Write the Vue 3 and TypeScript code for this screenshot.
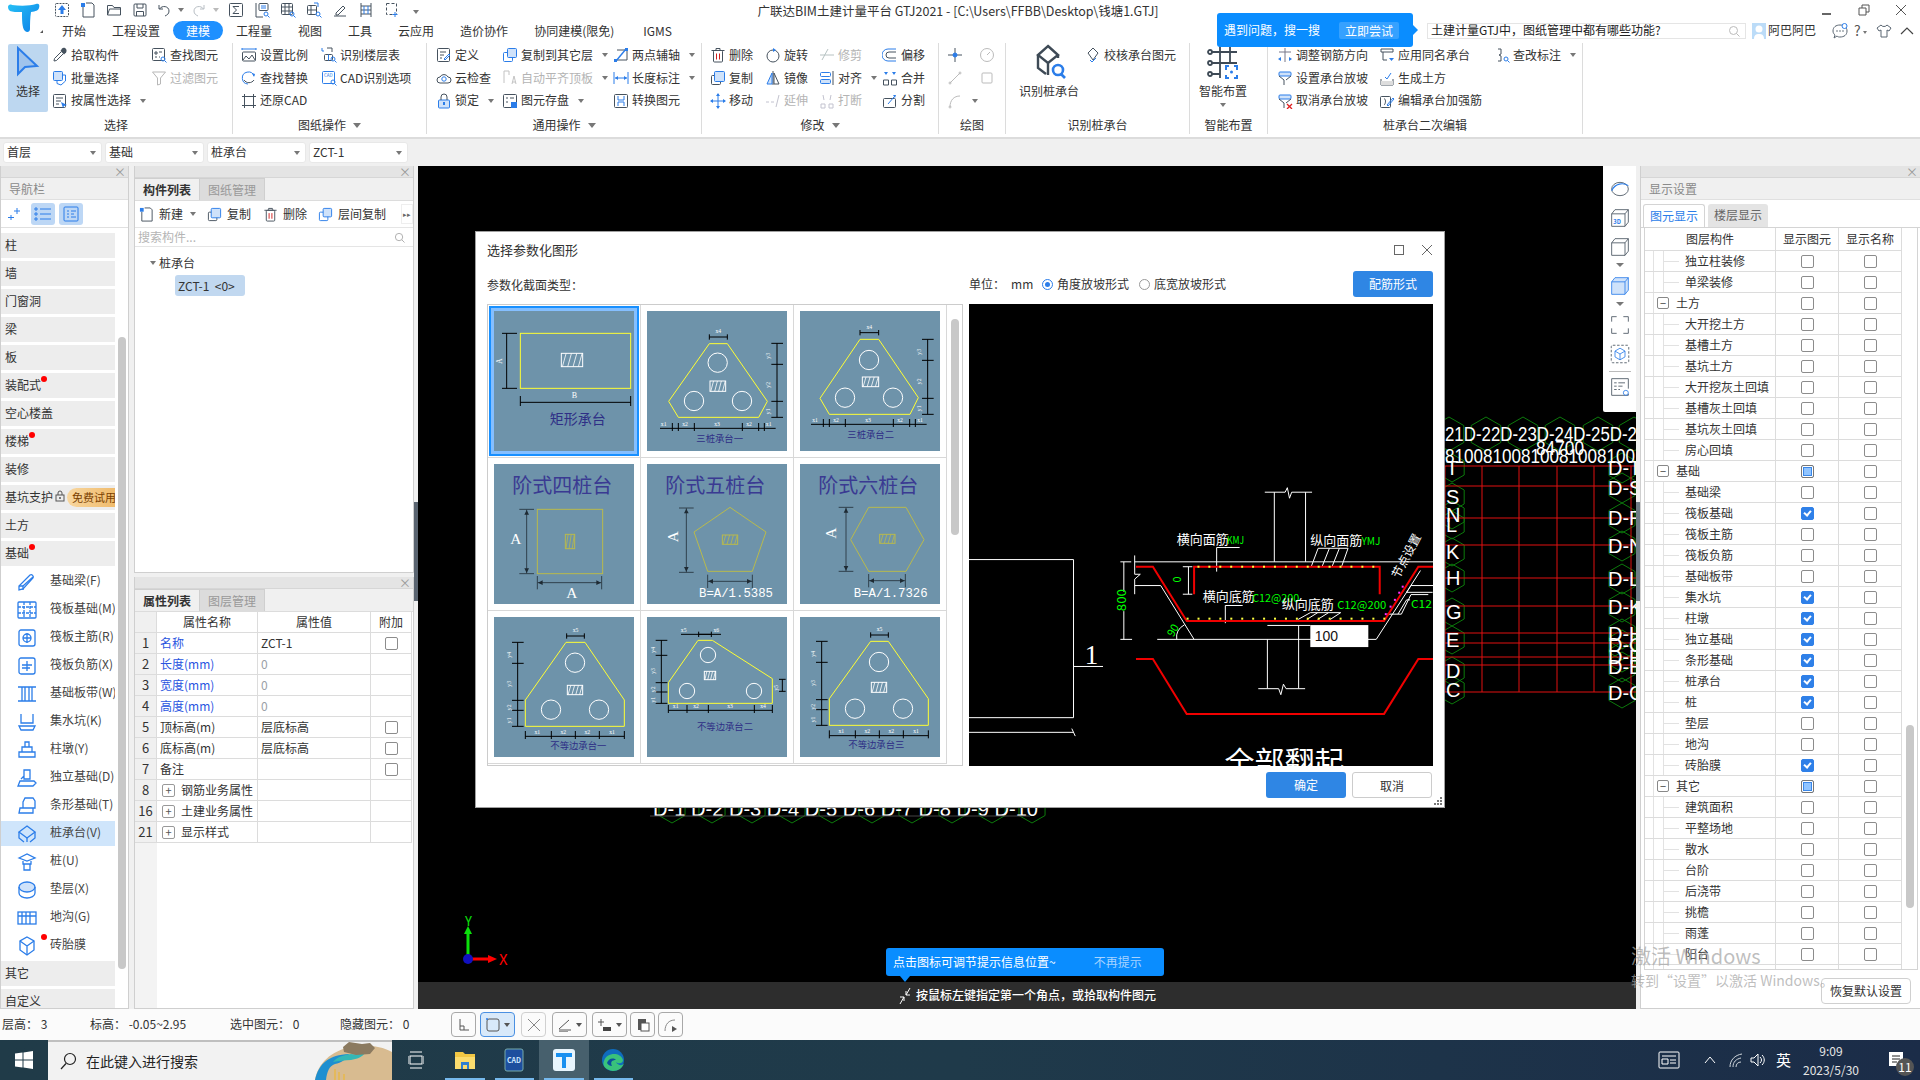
<script setup lang="ts">
type Item = { t?: string; i: string; d?: boolean; c?: boolean }
type Col = { w: number; items?: Item[]; big?: { i: string; t: string; a?: boolean; c?: boolean } }
type Group = { w: number; pad: number; label: string; car?: boolean; cols: Col[] }

const D = '#46525e'
const B = '#2b7de9'
const L = '#cfe2fa'
const P = (d: string, c = D, w = 1) => `<path d="${d}" fill="none" stroke="${c}" stroke-width="${w}"/>`
const F = (d: string, c = D) => `<path d="${d}" fill="${c}"/>`
const R = (x: number, y: number, w: number, h: number, c = D, f = 'none', r = 1) =>
  `<rect x="${x}" y="${y}" width="${w}" height="${h}" rx="${r}" stroke="${c}" fill="${f}"/>`
const C = (x: number, y: number, r: number, c = D, f = 'none') => `<circle cx="${x}" cy="${y}" r="${r}" stroke="${c}" fill="${f}"/>`
const mag = C(12, 12, 2, B) + P('M13.5 13.5l2 2', B)

const ic: Record<string, string> = {
  up: `<rect x="1.5" y="1.5" width="13" height="13" rx="1" stroke="${D}" fill="none" stroke-dasharray="2 1"/>` + F('M8 3l4 5H9.5v4h-3V8H4z', B),
  newf: P('M3 5v10h11V3l-2-2H6', D) + F('M1 1h4v4H1z', B),
  open: P('M1.5 13V3.5h5l1.5 2h6.5V13z M1.5 13l2-6h11', D),
  save: R(2, 2, 12, 12) + P('M5 2v4h6V2 M4.5 14V9.5h7V14'),
  undo: P('M3 3v4h4 M3.5 7C6 3 13 4 13 9c0 3-2 4-4 5'),
  redo: P('M13 3v4H9 M12.5 7C10 3 3 4 3 9c0 3 2 4 4 5', '#b8bec4'),
  sig: R(1.5, 1.5, 13, 13) + P('M11 4.5H5l3.5 3.5L5 11.5h6'),
  calc: P('M2 1v14h7') + R(5, 1.5, 9, 7) + P('M7 4h5M7 6h5', B) + mag,
  grid: R(1.5, 1.5, 11, 11) + P('M5 1.5v11M9 1.5v11M1.5 5h11M1.5 9h11') + mag,
  gridb: R(1.5, 3.5, 9, 9) + P('M5 3.5v9M1.5 8h9') + P('M8 1h4v4', B) + mag,
  pen: P('M2 14h12 M4 11l7-7 2 2-7 7H4z', D),
  tbl: P('M3 1v14M13 1v14M3 4h10M3 8h10M3 12h10') + P('M6 4v8M10 4v8', B),
  sel: `<rect x="2.5" y="1.5" width="10" height="11" stroke="${D}" fill="none" stroke-dasharray="3 2"/>` + P('M11 10v5M8.5 12.5h5', B),
  pick: F('M10 1.5c1-1 3-1 4 .5s.5 3-.5 4L12 7.5 8.5 4z') + P('M9 5L2.5 11.5 2 14l2.5-.5L11 7'),
  batch: R(1.5, 1.5, 9, 9, B, L) + P('M5 10.5v3l4 1.5 4.5-4V5h-3', B),
  attr: R(1.5, 1.5, 12, 13) + P('M4 5h7M4 8h5M4 11h3') + F('M9 9l6 3-3 1-1 2z', B),
  find: R(1.5, 1.5, 12, 12) + P('M4 5h2v2H4zM8 5h3M4 10h2M8 10h1') + mag,
  filt: P('M1.5 2h13l-5 6v6l-3 1V8z', '#999'),
  scale: P('M1 2h14M1 1v2M15 1v2', B) + R(1.5, 5, 13, 9) + P('M2 13l3-4 3 3 3-4 3 5'),
  fr: P('M13 6A6 6 0 1 0 7 14', B) + P('M3 10a6 6 0 0 0 10 0', D) + F('M11 3l3 1-1 3z', B),
  rest: R(3.5, 3.5, 9, 9) + P('M1 3.5h14M1 12.5h14M3.5 1v14M12.5 1v14'),
  floor: R(3.5, 7.5, 8, 6) + P('M7.5 7.5v6M1 1v3h2', B) + P('M6 1h5v4') + mag,
  cad: R(1.5, 1.5, 12, 12, B) + mag + `<text x="3" y="7" font-size="4.5" fill="${B}">CAD</text>`,
  def: R(1.5, 1.5, 12, 13) + P('M4 5h6M4 8h4M4 11h2') + P('M8 12l5-5 1 1-5 5z', B),
  cloud: P('M4 13a3 3 0 0 1 0-6 4.5 4.5 0 0 1 8 0 3 3 0 0 1 0 6z') + C(8, 9, 2.2, B),
  lock: R(2.5, 7, 11, 8, B, L) + P('M5 7V4a3 3 0 0 1 6 0v3') + F('M7 9h2v3H7z', B),
  cpto: R(1.5, 5.5, 9, 9, B) + R(5.5, 1.5, 9, 9, B, L),
  alg: P('M2 1h5v4 M2 1v12', '#aaa') + P('M10 14l2-8 2 8 M10.5 12h3', '#aaa'),
  store: R(1.5, 1.5, 13, 13) + P('M4 5h2M8 5h4M4 9h2') + F('M9 9h6v6H9z', B),
  twopt: P('M4 3h10v10H2', D) + P('M3 14L13 2', B, 1.4) + F('M12 1h3v3h-3zM1 12h3v3H1z', B),
  len: P('M1 2v12M15 2v12M2 8h12', B) + F('M2 8l3-2v4zM14 8l-3-2v4z', B),
  conv: R(1.5, 1.5, 13, 13) + P('M5 3v4h6V3M11 13V9H5v4', B),
  del: R(3.5, 3.5, 9, 11.5) + P('M1.5 3.5h13M6 3V1.5h4V3') + P('M6.5 6.5v6M9.5 6.5v6', '#d02020'),
  rot: C(8, 9, 6) + F('M8 1l3 2-3 2z', B),
  trim: P('M3 13L9 2M1 8h14', '#9aa'),
  copy: R(1.5, 5.5, 9, 9) + R(4.5, 1.5, 10, 10, B, L),
  mir: P('M8 1v14', D) + F('M7 3v11H2z', L) + P('M7 3v11H2z', B) + P('M9 3v11h5z'),
  alignI: R(1.5, 2.5, 10, 4, B) + R(1.5, 9.5, 10, 4, B, L) + P('M14 1v14'),
  merge: P('M1.5 10h5v5h-5zM9.5 10h5v5h-5z') + F('M2 2l2 3 2-3zM10 2l2 3 2-3z', B),
  move: P('M8 1v14M1 8h14', B) + F('M8 0l2 3H6zM8 16l2-3H6zM0 8l3 2V6zM16 8l-3 2V6z', B),
  ext: P('M1 9h3M6 9h3M11 14L14 2', '#aab'),
  brk: P('M2 11h4v4H2zM10 11h4v4h-4zM4 2l1 5M12 2l-1 5', '#aab'),
  off: P('M14 2H6a6 6 0 0 0 0 12h8', B) + P('M14 5H7a3 3 0 0 0 0 6h7'),
  split: R(1.5, 5.5, 12, 9) + P('M6 11l6-7', B) + F('M11 2l3 0-1 3z', B),
  dot: P('M8 1v14M1 8h14', D) + C(8, 8, 2, B, B),
  dial: C(8, 8, 6.5, '#bbb') + P('M8 8l3-3', '#bbb'),
  ln: P('M3 13L13 3', '#bbb') + C(3, 13, 1, '#bbb') + C(13, 3, 1, '#bbb'),
  sq: R(3, 3, 10, 10, '#bbb'),
  arc: P('M3 14C3 7 7 3 13 3', '#bbb') + C(3, 14, 1, '#bbb'),
  chk: P('M8 1l5 5-5 7-5-7z') + P('M5 13l2 2 4-4', B),
  adj: P('M8 1v14', '#778') + P('M2 5h12', '#778') + F('M1 12l3-2v4zM15 12l-3-2v4z', B),
  slope: R(2, 2, 12, 4, B, L) + P('M2 6l5 4v5M14 6l-5 4'),
  slopex: R(2, 2, 12, 4, B, L) + P('M2 6l5 4v5M14 6l-5 4') + P('M10 11l5 5M15 11l-5 5', '#e02020', 1.3),
  same: P('M2 2h12v3H2zM4 5v8h4') + F('M10 11h5l-2.5 3z', B),
  soil: P('M2 9v6h12V9') + F('M2 11h12v4H2z', '#ddd') + P('M6 7l2 2 4-6', B),
  edit: R(1.5, 3.5, 10, 11) + P('M5 6c2-1 2 5 0 6') + P('M8 12l6-7 1 1-6 7z', B),
  note: P('M4 2h3v5l-2 1 2 1v5H4') + mag
}
const bic: Record<string, string> = {
  arrow: `<path d="M10 4v26l7-7 12-1z" fill="#9fc3ec" stroke="${B}" stroke-width="2"/>`,
  pile: `<g fill="none" stroke="#3e4a56" stroke-width="2.4"><path d="M19 2l10 9-10 8-10-8z"/><path d="M9 11v13l8 6M29 11v3M19 19v12"/></g><circle cx="29" cy="26" r="5" fill="none" stroke="${B}" stroke-width="2.6"/><path d="M32 30l4 4" stroke="${B}" stroke-width="2.6"/>`,
  smart: `<g fill="none" stroke="#3e4a56" stroke-width="1.8"><path d="M9 8h25M9 19h25M9 30h8M17 2v32M27 2v16"/><circle cx="7" cy="8" r="2"/><circle cx="7" cy="19" r="2"/><circle cx="7" cy="30" r="2"/></g><g fill="none" stroke="${B}" stroke-width="2"><path d="M23 26v-4h3M31 22h3v4M34 31v3h-3M26 34h-3v-3"/></g><circle cx="28.5" cy="28" r="1.5" fill="${B}"/>`
}

const groups: Group[] = [
  { w: 233, pad: 8, label: '选择', cols: [
    { w: 44, big: { i: 'arrow', t: '选择', a: true } },
    { w: 99, items: [{ i: 'pick', t: '拾取构件' }, { i: 'batch', t: '批量选择' }, { i: 'attr', t: '按属性选择', c: true }] },
    { w: 80, items: [{ i: 'find', t: '查找图元' }, { i: 'filt', t: '过滤图元', d: true }] }] },
  { w: 194, pad: 8, label: '图纸操作', car: true, cols: [
    { w: 80, items: [{ i: 'scale', t: '设置比例' }, { i: 'fr', t: '查找替换' }, { i: 'rest', t: '还原CAD' }] },
    { w: 100, items: [{ i: 'floor', t: '识别楼层表' }, { i: 'cad', t: 'CAD识别选项' }] }] },
  { w: 275, pad: 9, label: '通用操作', car: true, cols: [
    { w: 66, items: [{ i: 'def', t: '定义' }, { i: 'cloud', t: '云检查' }, { i: 'lock', t: '锁定', c: true }] },
    { w: 111, items: [{ i: 'cpto', t: '复制到其它层', c: true }, { i: 'alg', t: '自动平齐顶板', d: true, c: true }, { i: 'store', t: '图元存盘', c: true }] },
    { w: 88, items: [{ i: 'twopt', t: '两点辅轴', c: true }, { i: 'len', t: '长度标注', c: true }, { i: 'conv', t: '转换图元' }] }] },
  { w: 237, pad: 8, label: '修改', car: true, cols: [
    { w: 55, items: [{ i: 'del', t: '删除' }, { i: 'copy', t: '复制' }, { i: 'move', t: '移动' }] },
    { w: 54, items: [{ i: 'rot', t: '旋转' }, { i: 'mir', t: '镜像' }, { i: 'ext', t: '延伸', d: true }] },
    { w: 63, items: [{ i: 'trim', t: '修剪', d: true }, { i: 'alignI', t: '对齐', c: true }, { i: 'brk', t: '打断', d: true }] },
    { w: 50, items: [{ i: 'off', t: '偏移' }, { i: 'merge', t: '合并' }, { i: 'split', t: '分割' }] }] },
  { w: 67, pad: 8, label: '绘图', cols: [
    { w: 32, items: [{ i: 'dot' }, { i: 'ln' }, { i: 'arc', c: true }] },
    { w: 24, items: [{ i: 'dial' }, { i: 'sq' }] }] },
  { w: 184, pad: 7, label: '识别桩承台', cols: [
    { w: 72, big: { i: 'pile', t: '识别桩承台' } },
    { w: 100, items: [{ i: 'chk', t: '校核承台图元' }] }] },
  { w: 78, pad: 3, label: '智能布置', cols: [{ w: 60, big: { i: 'smart', t: '智能布置', c: true } }] },
  { w: 315, pad: 9, label: '桩承台二次编辑', cols: [
    { w: 102, items: [{ i: 'adj', t: '调整钢筋方向' }, { i: 'slope', t: '设置承台放坡' }, { i: 'slopex', t: '取消承台放坡' }] },
    { w: 115, items: [{ i: 'same', t: '应用同名承台' }, { i: 'soil', t: '生成土方' }, { i: 'edit', t: '编辑承台加强筋' }] },
    { w: 80, items: [{ i: 'note', t: '查改标注', c: true }] }] }
]

const qat = ['up', 'newf', 'open', 'save']
const qat2 = ['sig', 'calc', 'grid', 'gridb', 'pen', 'tbl', 'sel']
const tabs = ['开始', '工程设置', '建模', '工程量', '视图', '工具', '云应用', '造价协作', '协同建模(限免)', 'IGMS']
const selects = ['首层', '基础', '桩承台', 'ZCT-1']

const navTop = ['柱', '墙', '门窗洞', '梁', '板', '装配式', '空心楼盖', '楼梯', '装修', '基坑支护', '土方', '基础']
const navDots: Record<string, number> = { 装配式: 40, 楼梯: 28, 基础: 28, 砖胎膜: 40 }
const s20 = `fill="none" stroke="${B}" stroke-width="1.3"`
const navSub: { t: string; i: string; on?: boolean }[] = [
  { t: '基础梁(F)', i: `<g ${s20}><path d="M2 18v-4L13 3c2-1 4 1 3 3L6 17z"/><path d="M2 14h4v4"/><path d="M6 14L16 5"/></g>` },
  { t: '筏板基础(M)', i: `<g ${s20}><rect x="1" y="2" width="18" height="16" rx="1"/><path d="M7 2v16M13 2v16M1 7h18M1 13h18" stroke-dasharray="3 1"/></g>` },
  { t: '筏板主筋(R)', i: `<g ${s20}><rect x="2" y="2" width="16" height="16" rx="2"/><circle cx="10" cy="10" r="4"/><path d="M10 5v10M6 10h8"/></g>` },
  { t: '筏板负筋(X)', i: `<g ${s20}><rect x="2" y="2" width="16" height="16" rx="2"/><path d="M5 9h10M5 12h8M10 5v10"/></g>` },
  { t: '基础板带(W)', i: `<g ${s20}><path d="M1 3h18M1 17h18M5 3v14M8 3v14M12 3v14M15 3v14"/></g>` },
  { t: '集水坑(K)', i: `<g ${s20}><path d="M4 2v9h12V2M2 14h16l-2 4H4z"/></g>` },
  { t: '柱墩(Y)', i: `<g ${s20}><path d="M8 2h4v5H8zM5 7h10v5H5zM2 12h16v5H2z"/></g>` },
  { t: '独立基础(D)', i: `<g ${s20}><path d="M7 2h6v9H7zM4 11l3-3M3 13h14l2 2-3 3H1z"/></g>` },
  { t: '条形基础(T)', i: `<g ${s20}><path d="M8 2h8l2 3v7H6V6zM3 12h13v5H2z"/></g>` },
  { t: '桩承台(V)', on: true, i: `<g ${s20}><path d="M10 2l8 6-8 6-8-6z"/><path d="M2 8v6l5 4M18 8v6l-5 4M10 14v4"/></g>` },
  { t: '桩(U)', i: `<g ${s20}><path d="M2 6l8-4 8 4-8 3z"/><path d="M6 9v3h8V9M7 12v6h6v-6"/></g>` },
  { t: '垫层(X)', i: `<g ${s20}><ellipse cx="10" cy="7" rx="8" ry="5" fill="#cfe2fa"/><path d="M2 7v6c0 3 4 5 8 5s8-2 8-5V7"/></g>` },
  { t: '地沟(G)', i: `<g ${s20}><rect x="1" y="4" width="18" height="12"/><path d="M5 4v12M9 4v12M13 4v12M1 8h18"/></g>` },
  { t: '砖胎膜', i: `<g ${s20}><path d="M10 1l7 4v9l-7 5-7-5V5z"/><path d="M3 5l7 5 7-5M10 10v9"/></g>` }
]

const props = [
  { n: '1', a: '名称', v: 'ZCT-1', l: true, c: true },
  { n: '2', a: '长度(mm)', v: '0', l: true, z: true },
  { n: '3', a: '宽度(mm)', v: '0', l: true, z: true },
  { n: '4', a: '高度(mm)', v: '0', l: true, z: true },
  { n: '5', a: '顶标高(m)', v: '层底标高', c: true },
  { n: '6', a: '底标高(m)', v: '层底标高', c: true },
  { n: '7', a: '备注', v: '', c: true },
  { n: '8', a: '钢筋业务属性', v: '', p: true },
  { n: '16', a: '土建业务属性', v: '', p: true },
  { n: '21', a: '显示样式', v: '', p: true }
]

type Row = { t: string; par?: boolean; s?: 'on' | 'mix' }
const rows: Row[] = [
  { t: '独立柱装修' }, { t: '单梁装修' }, { t: '土方', par: true }, { t: '大开挖土方' }, { t: '基槽土方' }, { t: '基坑土方' },
  { t: '大开挖灰土回填' }, { t: '基槽灰土回填' }, { t: '基坑灰土回填' }, { t: '房心回填' },
  { t: '基础', par: true, s: 'mix' }, { t: '基础梁' }, { t: '筏板基础', s: 'on' }, { t: '筏板主筋' }, { t: '筏板负筋' }, { t: '基础板带' },
  { t: '集水坑', s: 'on' }, { t: '柱墩', s: 'on' }, { t: '独立基础', s: 'on' }, { t: '条形基础', s: 'on' }, { t: '桩承台', s: 'on' }, { t: '桩', s: 'on' },
  { t: '垫层' }, { t: '地沟' }, { t: '砖胎膜', s: 'on' }, { t: '其它', par: true, s: 'mix' }, { t: '建筑面积' }, { t: '平整场地' },
  { t: '散水' }, { t: '台阶' }, { t: '后浇带' }, { t: '挑檐' }, { t: '雨蓬' }, { t: '阳台' }, { t: '' }
]

// ---------- thumbnails (420 unit square) ----------
const Y = '#ffff33'
const OL = '#b9ba4c'
const INK = '#2f2f86'
const SER = "'Liberation Serif','Noto Sans CJK SC',serif"
const ln = (d: string, c = '#000', w = 3) => `<path d="${d}" fill="none" stroke="${c}" stroke-width="${w}"/>`
const tx = (x: number, y: number, s: string, size: number, c = '#fff', fam = '', anchor = 'middle', rot = 0) =>
  `<text transform="translate(${x} ${y}) rotate(${rot})" font-size="${size}" fill="${c}" text-anchor="${anchor}" ${fam ? `font-family="${fam}"` : ''}>${s}</text>`
const hatch = (x1: number, y1: number, x2: number, y2: number, c = '#fff', n = 4) => {
  let s = `<rect x="${x1}" y="${y1}" width="${x2 - x1}" height="${y2 - y1}" fill="none" stroke="${c}" stroke-width="3"/>`
  const dx = (x2 - x1) / n
  for (let i = 0; i < n; i++) s += ln(`M${x1 + dx * i + dx * 0.9} ${y1}L${x1 + dx * i + dx * 0.2} ${y2}`, c, 2.4)
  return s
}
const small = (x: number, y: number, s: string, rot = 0) => tx(x, y, s, 17, '#fff', SER, 'middle', rot)
type Tri = {
  poly: string; cs: number[][]; r: number; h: number[]; top: number[]; topT: string
  vx: number; vy: number[]; vT: string[]; side: number
  by: number; bx: number[]; bt: number[]; bl: [string, number][]; lab: [number, number, string]
}
const tri = (o: Tri) => {
  let s = `<polygon points="${o.poly}" fill="none" stroke="${Y}" stroke-width="3"/>`
  o.cs.forEach(c => { s += `<circle cx="${c[0]}" cy="${c[1]}" r="${o.r}" fill="none" stroke="#fff" stroke-width="3"/>` })
  s += hatch(o.h[0], o.h[1], o.h[2], o.h[3])
  s += ln(`M${o.top[0]} ${o.top[2]}H${o.top[1]}M${o.top[0]} ${o.top[2] - 8}v16M${o.top[1]} ${o.top[2] - 8}v16`)
  s += small((o.top[0] + o.top[1]) / 2, o.top[2] - 12, o.topT)
  s += ln(`M${o.vx} ${o.vy[0]}V${o.vy[o.vy.length - 1]}`)
  o.vy.forEach(y => { s += ln(`M${o.vx - 17} ${y}h35`) })
  o.vT.forEach((t, i) => { s += small(o.vx + o.side * 20, (o.vy[i] + o.vy[i + 1]) / 2 + 6, t, -90) })
  s += ln(`M${o.bx[0]} ${o.by}H${o.bx[1]}`)
  o.bt.forEach(x => { s += ln(`M${x} ${o.by - 16}v24`) })
  o.bl.forEach(b => { s += small(b[1], o.by - 8, b[0]) })
  s += tx(o.lab[0], o.lab[1], o.lab[2], 28, INK)
  return s
}
const dimArrV = (x: number, y1: number, y2: number) =>
  ln(`M${x} ${y1}V${y2}M${x - 22} ${y1}h44M${x - 22} ${y2}h44`, '#30404c') +
  `<path d="M${x} ${y1 + 2}l-7 14h14zM${x} ${y2 - 2}l-7 -14h14z" fill="#1e2a33"/>`
const dimArrH = (x1: number, x2: number, y: number) =>
  ln(`M${x1} ${y}H${x2}M${x1} ${y - 20}v40M${x2} ${y - 20}v40`, '#30404c') +
  `<path d="M${x1 + 2} ${y}l14 -7v14zM${x2 - 2} ${y}l-14 -7v14z" fill="#1e2a33"/>`
const stepT = (s: string) => tx(205, 86, s, 60, '#3a3a92', SER)

const thumbs: string[] = [
  `<rect x="79" y="67" width="331" height="165" fill="none" stroke="${Y}" stroke-width="3"/>` + hatch(202, 127, 266, 167) +
    ln('M24 67H69M24 232H69M38 67V232M79 255V285M410 255V285M79 274H410') +
    tx(25, 150, 'A', 22, '#fff', SER, 'middle', -90) + tx(241, 262, 'B', 24, '#fff', SER) + tx(251, 340, '矩形承台', 42, INK),
  tri({ poly: '187,98 241,98 361,271 335,319 94,319 65,271', cs: [[212, 155], [141, 270], [285, 270]], r: 29, h: [189, 210, 236, 241],
    top: [187, 241, 78], topT: 'x4', vx: 390, vy: [97, 160, 271, 319], vT: ['y3', 'y2', 'y1'], side: -1, by: 352, bx: [39, 386],
    bt: [76, 94, 142, 286, 335, 352], bl: [['x1', 50], ['x2', 114], ['x3', 210], ['x2', 306], ['x1', 365]], lab: [218, 392, '三桩承台一'] }),
  tri({ poly: '180,85 236,85 355,260 330,310 88,310 60,262', cs: [[207, 147], [135, 260], [279, 260]], r: 29, h: [187, 198, 236, 227],
    top: [180, 236, 65], topT: 'x4', vx: 383, vy: [85, 148, 262, 310], vT: ['y3', 'y2', 'y1'], side: -1, by: 340, bx: [33, 380],
    bt: [70, 88, 136, 280, 329, 346], bl: [['x1', 45], ['x2', 108], ['x3', 204], ['x2', 300], ['x1', 360]], lab: [212, 380, '三桩承台二'] }),
  stepT('阶式四桩台') + `<rect x="130" y="136" width="196" height="193" fill="none" stroke="${OL}" stroke-width="3"/>` +
    hatch(214, 211, 242, 254, OL, 3) + dimArrV(98, 136, 329) + dimArrH(130, 323, 356) + tx(65, 240, 'A', 46, '#fff', SER) + tx(233, 402, 'A', 46, '#fff', SER),
  stepT('阶式五桩台') + `<polygon points="249,130 357,204 316,322 182,322 141,204" fill="none" stroke="${OL}" stroke-width="3"/>` +
    hatch(226, 213, 272, 241, OL) + dimArrV(118, 132, 325) + dimArrH(182, 316, 352) + tx(92, 218, 'A', 46, '#fff', SER, 'middle', -90) + tx(267, 398, 'B=A/1.5385', 37, '#fff', "'Liberation Mono',monospace"),
  stepT('阶式六桩台') + `<polygon points="206,130 318,130 372,227 318,322 206,322 152,227" fill="none" stroke="${OL}" stroke-width="3"/>` +
    hatch(239, 211, 285, 238, OL) + dimArrV(138, 130, 322) + dimArrH(206, 316, 350) + tx(107, 208, 'A', 46, '#fff', SER, 'middle', -90) + tx(272, 398, 'B=A/1.7326', 37, '#fff', "'Liberation Mono',monospace"),
  tri({ poly: '216,76 273,76 391,249 391,328 94,328 94,249', cs: [[243, 137], [171, 278], [315, 278]], r: 29, h: [220, 205, 266, 233],
    top: [218, 271, 57], topT: 'x5', vx: 71, vy: [76, 139, 250, 280, 328], vT: ['y4', 'y3', 'y2', 'y1'], side: -1, by: 358, bx: [94, 391],
    bt: [94, 172, 244, 316, 391], bl: [['x1', 130], ['x2', 208], ['x2', 280], ['x1', 354]], lab: [253, 397, '不等边承台一'] }),
  tri({ poly: '153,70 196,70 376,185 376,259 64,259 64,197', cs: [[183, 114], [120, 222], [321, 222]], r: 23, h: [172, 163, 206, 188],
    top: [155, 193, 52], topT: '', vx: 43, vy: [70, 115, 197, 225, 259], vT: ['y4', 'y3', 'y2', 'y1'], side: -1, by: 280, bx: [64, 376],
    bt: [64, 120, 184, 322, 376], bl: [['x1', 86], ['x2', 147], ['x3', 249], ['x4', 348]], lab: [234, 340, '不等边承台二'] }) +
    ln('M102 52H222M406 187V223M396 187h20M396 223h20') + small(110, 46, 'x5') + small(208, 46, 'x6') + small(392, 212, 'y5', -90),
  tri({ poly: '212,73 265,73 385,245 385,325 88,325 88,245', cs: [[237, 135], [165, 275], [309, 275]], r: 29, h: [214, 196, 260, 226],
    top: [212, 265, 54], topT: 'x5', vx: 65, vy: [73, 136, 248, 278, 325], vT: ['y4', 'y3', 'y2', 'y1'], side: -1, by: 356, bx: [88, 385],
    bt: [88, 166, 238, 310, 385], bl: [['x1', 124], ['x2', 202], ['x2', 274], ['x1', 348]], lab: [229, 394, '不等边承台三'] })
]

// ---------- preview drawing helpers ----------
const px = (z: number) => (z - 21) * 0.4337
const py = (z: number) => (z - 194) * 0.3764
const dotsTop = Array.from({ length: 17 }, (_, i) => 550 + i * 25.2)
const dotsBot = Array.from({ length: 19 }, (_, i) => 525 + i * 25.2)
const dotsMag = [[1021, 945], [1013, 961], [1003, 980], [993, 998], [982, 1018]]

// ---------- CAD background ----------
const hex = (x: number, y: number, r = 15) =>
  [[0, -r], [r * 0.87, -r / 2], [r * 0.87, r / 2], [0, r], [-r * 0.87, r / 2], [-r * 0.87, -r / 2]].map(p => `${x + p[0]},${y + p[1]}`).join(' ')
const leftL: [string, number][] = [['T', 468], ['S', 497], ['N', 515], ['L', 525], ['K', 552], ['H', 578], ['G', 612], ['E', 640], ['D', 671], ['C', 690]]
const rightL: [string, number][] = [['D-T', 468], ['D-S', 488], ['D-R', 518], ['D-N', 546], ['D-L', 579], ['D-K', 607], ['D-H', 634], ['D-G', 645], ['D-F', 657], ['D-E', 667], ['D-C', 693]]
const topHex = [1449, 1486, 1523, 1560, 1598, 1634]
const botHex = [672, 712, 752, 792, 832, 872, 912, 952, 992, 1032]
const gridX = [1445, 1482, 1519, 1557, 1594, 1631]
const gridY = [466, 486, 518, 545, 578, 606, 633, 643, 657, 665, 692]

const stBtns = [
  { w: 25, ml: 0, i: P('M4 2v11h9M4 9h4v4', '#555') },
  { w: 35, ml: 4, on: true, c: true, i: `<rect x="2" y="2" width="12" height="12" rx="2" stroke="#555" fill="none"/><circle cx="2" cy="2" r="1" fill="${B}"/>` },
  { w: 25, ml: 6, dis: true, i: P('M2 2l12 12M14 2L2 14', '#888') },
  { w: 35, ml: 6, c: true, i: P('M2 12L12 3M2 13h12', '#555') + '<path d="M2 14h9v1H2z" fill="#999"/>' },
  { w: 35, ml: 5, c: true, i: P('M4 2v7M1 5h6', '#555') + '<rect x="6" y="10" width="8" height="4" fill="#444"/>' },
  { w: 25, ml: 3, i: '<rect x="3" y="2" width="8" height="11" fill="#555"/><rect x="6" y="6" width="8" height="8" stroke="#555" fill="#fff"/>' },
  { w: 25, ml: 3, i: P('M2 14C2 7 6 3 12 3', '#888') + '<path d="M9 9l5 3-5 3z" fill="#555"/>' }
]
</script>

<template>
  <div class="app">
    <!-- header -->
    <div class="head">
      <div class="logo">
        <svg width="49" height="41" viewBox="0 0 49 41">
          <defs>
            <linearGradient id="lg" x1="0" y1="0" x2="1" y2="1"><stop offset="0" stop-color="#27c0f5" /><stop offset="1" stop-color="#0a7fe8" /></linearGradient>
          </defs>
          <path d="M8 7c0-2 2-3 4-2 8 1 18 1 24-1 3-1 4 1 3 4-1 3-3 3-8 4-1 6-1 12-1 17 0 3-3 4-5 2-3-3-3-11-3-19-5 0-10 0-12-1-1-1-2-2-2-4z" fill="url(#lg)" />
          <path d="M43 33v-3l-3 3z" fill="#555" />
        </svg>
      </div>
      <div class="head-r">
        <div class="titlebar">
          <div class="qat">
            <svg v-for="q in qat" :key="q" class="qi" viewBox="0 0 16 16" v-html="ic[q]"></svg>
            <span class="qc"><svg class="qi1" viewBox="0 0 16 16" v-html="ic.undo"></svg><i class="car"></i></span>
            <span class="qc"><svg class="qi1" viewBox="0 0 16 16" v-html="ic.redo"></svg><i class="car lite"></i></span>
            <svg v-for="q in qat2" :key="q" class="qi" viewBox="0 0 16 16" v-html="ic[q]"></svg>
            <span class="qmore"><i class="car"></i></span>
          </div>
          <div class="title">广联达BIM土建计量平台 GTJ2021 - [C:\Users\FFBB\Desktop\钱塘1.GTJ]</div>
          <div class="winbtns">
            <svg width="14" height="14" viewBox="0 0 14 14"><path d="M2 10h9v2H2z" fill="#666" /></svg>
            <svg width="14" height="14" viewBox="0 0 14 14"><path d="M2 5h7v7H2zM5 5V2h7v7H9" fill="none" stroke="#555" /></svg>
            <svg width="14" height="14" viewBox="0 0 14 14"><path d="M2 2l10 10M12 2L2 12" stroke="#555" /></svg>
          </div>
        </div>
        <div class="menurow">
          <div class="tabs">
            <span v-for="t in tabs" :key="t" class="tab" :class="{ act: t === '建模' }">{{ t }}</span>
          </div>
          <div class="search">
            <span>土建计量GTJ中&#xFF0C;图纸管理中都有哪些功能?</span>
            <svg width="12" height="12" viewBox="0 0 12 12"><circle cx="5.5" cy="5.5" r="4" fill="none" stroke="#bbb" /><path d="M8.5 8.5l3 3" stroke="#bbb" /></svg>
          </div>
          <div class="avatar"><svg width="14" height="16" viewBox="0 0 14 16"><path d="M0 0h14v16H0z" fill="#bcdcf8" /><circle cx="7" cy="6" r="3.5" fill="#fff" /><path d="M2 16c0-4 2-5 5-5s5 1 5 5z" fill="#fff" /></svg></div>
          <span class="uname">阿巴阿巴</span>
          <svg class="hi chat" viewBox="0 0 16 16"><path d="M8 2c4 0 7 2 7 6s-3 6-7 6c-1 0-2 0-3-1l-3 2 1-3C2 11 1 10 1 8c0-4 3-6 7-6z" fill="none" stroke="#5a6672" /><circle cx="5" cy="8" r=".8" fill="#5a6672" /><circle cx="8" cy="8" r=".8" fill="#5a6672" /><circle cx="11" cy="8" r=".8" fill="#5a6672" /><circle cx="12.5" cy="3" r="2.5" fill="#fff" stroke="#2b7de9" /></svg>
          <span class="qm">?<i class="car tiny"></i></span>
          <svg class="hi shirt" viewBox="0 0 16 16"><path d="M5 2L1 5l2 3 2-1v7h6V7l2 1 2-3-4-3c-1 2-5 2-6 0z" fill="none" stroke="#5a6672" /></svg>
          <svg class="hi upb" viewBox="0 0 16 16"><path d="M2 11l6-6 6 6" fill="none" stroke="#444" stroke-width="1.2" /></svg>
        </div>
      </div>
    </div>

    <!-- ribbon -->
    <div class="ribbon">
      <div v-for="g in groups" :key="g.label" class="rg" :style="{ width: g.w + 'px' }">
        <div class="rg-body" :style="{ paddingLeft: g.pad + 'px' }">
          <div v-for="(c, ci) in g.cols" :key="ci" class="rc" :style="{ width: c.w + 'px' }">
            <div v-if="c.big" class="big" :class="{ active: c.big.a }">
              <svg class="bigi" viewBox="0 0 40 38" v-html="bic[c.big.i]"></svg>
              <span class="bigt">{{ c.big.t }}</span>
              <i v-if="c.big.c" class="car bigc"></i>
            </div>
            <template v-else>
              <div v-for="it in c.items" :key="it.i" class="ri" :class="{ dis: it.d }">
                <svg class="ic" viewBox="0 0 16 16" v-html="ic[it.i]"></svg>
                <span v-if="it.t">{{ it.t }}</span>
                <i v-if="it.c" class="car"></i>
              </div>
            </template>
          </div>
        </div>
        <div class="rg-label">{{ g.label }}<i v-if="g.car" class="car lab"></i></div>
      </div>
    </div>

    <!-- selectors -->
    <div class="selbar">
      <div v-for="s in selects" :key="s" class="sel">{{ s }}<i class="car"></i></div>
    </div>

    <!-- main -->
    <div class="main">
      <!-- nav -->
      <div class="nav panel">
        <div class="stripe"><span class="xx">×</span></div>
        <div class="phead">导航栏</div>
        <div class="navtool">
          <svg width="16" height="16" viewBox="0 0 16 16"><path d="M11 2v6M8 5h6M5 9v5M2 11.5h6" stroke="#2b7de9" fill="none" /></svg>
          <span class="ntb"><svg width="18" height="16" viewBox="0 0 18 16"><path d="M6 3h11M6 8h11M6 13h11" stroke="#2b7de9" /><path d="M1 2h2v2H1zM1 7h2v2H1zM1 12h2v2H1z" fill="none" stroke="#2b7de9" /></svg></span>
          <span class="ntb"><svg width="16" height="16" viewBox="0 0 16 16"><rect x="1" y="1" width="14" height="14" rx="1" fill="none" stroke="#2b7de9" /><path d="M4 5h2M8 5h5M4 8h2M8 8h3M4 11h2M8 11h5" stroke="#2b7de9" /></svg></span>
        </div>
        <div class="navbody">
          <div class="navlist">
            <div v-for="n in navTop" :key="n" class="nh">
              {{ n }}
              <i v-if="navDots[n]" class="dot" :style="{ left: navDots[n] + 'px' }"></i>
              <template v-if="n === '基坑支护'">
                <svg class="lock" width="10" height="12" viewBox="0 0 10 12"><rect x="1" y="5" width="8" height="6" fill="none" stroke="#555" /><path d="M3 5V3a2 2 0 0 1 4 0v2" fill="none" stroke="#555" /><circle cx="5" cy="8" r="1" fill="#555" /></svg>
                <span class="free">免费试用</span>
              </template>
            </div>
            <div v-for="n in navSub" :key="n.t" class="ns" :class="{ on: n.on }">
              <svg class="nsi" viewBox="0 0 20 20" v-html="n.i"></svg>
              <span class="nst">{{ n.t }}</span>
              <i v-if="navDots[n.t]" class="dot sub" :style="{ left: navDots[n.t] + 'px' }"></i>
            </div>
            <div class="nh">其它</div>
            <div class="nh">自定义</div>
          </div>
          <div class="navscroll"><div class="navthumb"></div></div>
        </div>
      </div>

      <div class="gut g-l"></div>

      <!-- mid -->
      <div class="mid">
        <div class="panel up">
          <div class="stripe"><span class="xx">×</span></div>
          <div class="ptabs">
            <span class="ptab act">构件列表</span><span class="ptab">图纸管理</span>
          </div>
          <div class="mtool">
            <svg class="mti i0" viewBox="0 0 16 16" v-html="ic.newf"></svg><span>新建</span><i class="car c0"></i>
            <svg class="mti i1" viewBox="0 0 16 16" v-html="ic.copy"></svg><span>复制</span>
            <svg class="mti i2" viewBox="0 0 16 16" v-html="ic.del"></svg><span>删除</span>
            <svg class="mti i3" viewBox="0 0 16 16" v-html="ic.cpto"></svg><span>层间复制</span>
            <span class="more">▸▸</span>
          </div>
          <div class="msearch">
            <span>搜索构件...</span>
            <svg width="11" height="11" viewBox="0 0 12 12"><circle cx="5.5" cy="5.5" r="4" fill="none" stroke="#aaa" /><path d="M8.5 8.5l3 3" stroke="#aaa" /></svg>
          </div>
          <div class="tree">
            <div class="t1"><i class="car"></i>桩承台</div>
            <div class="t2"><span class="t2in">ZCT-1&nbsp;&nbsp;&lt;0&gt;</span></div>
          </div>
        </div>
        <div class="panel down">
          <div class="stripe"><span class="xx">×</span></div>
          <div class="ptabs">
            <span class="ptab act">属性列表</span><span class="ptab">图层管理</span>
          </div>
          <div class="pt">
            <div class="ptr ph">
              <span class="c-n"></span><span class="c-a ctr">属性名称</span><span class="c-v ctr">属性值</span><span class="c-x ctr">附加</span>
            </div>
            <div v-for="p in props" :key="p.n" class="ptr">
              <span class="c-n num">{{ p.n }}</span>
              <span class="c-a" :class="{ link: p.l }"><i v-if="p.p" class="plus">+</i>{{ p.a }}</span>
              <span class="c-v" :class="{ zero: p.z }">{{ p.v }}</span>
              <span class="c-x ctr"><i v-if="p.c" class="cb"></i></span>
            </div>
            <div class="ptfill"></div>
          </div>
        </div>
      </div>

      <div class="gut g-m"><i class="handle"></i></div>

      <!-- canvas -->
      <div class="canvas">
        <div class="cad">
          <svg class="cadsvg" width="1218" height="816" viewBox="418 166 1218 816">
            <g fill="none" stroke="#0c7a0c">
              <polygon v-for="x in topHex" :key="'t' + x" :points="hex(x, 434, 17)" />
              <polygon v-for="l in leftL" :key="'l' + l[0]" :points="hex(1452, l[1], 14)" />
              <polygon v-for="l in rightL" :key="'r' + l[0]" :points="hex(1622, l[1], 15)" />
              <polygon v-for="x in botHex" :key="'b' + x" :points="hex(x, 808, 15)" />
            </g>
            <g stroke="#e01010">
              <path v-for="x in gridX" :key="'gx' + x" :d="`M${x} 466V692`" />
              <path v-for="y in gridY" :key="'gy' + y" :d="`M1445 ${y}H1636`" />
            </g>
            <g class="cadt" fill="#fff">
              <text x="1445" y="441" textLength="192" lengthAdjust="spacingAndGlyphs">21D-22D-23D-24D-25D-2</text>
              <text x="1445" y="463" textLength="190" lengthAdjust="spacingAndGlyphs">81008100810081008100</text>
              <text x="1536" y="455" textLength="48" lengthAdjust="spacingAndGlyphs">84700</text>
              <text v-for="l in leftL" :key="'tl' + l[0]" x="1446" :y="l[1] + 7">{{ l[0] }}</text>
              <text v-for="l in rightL" :key="'tr' + l[0]" x="1608" :y="l[1] + 7">{{ l[0] }}</text>
              <text x="653" y="816" textLength="385" lengthAdjust="spacingAndGlyphs">D-1 D-2 D-3 D-4 D-5 D-6 D-7 D-8 D-9 D-10</text>
            </g>
            <path d="M650 816H1030" stroke="#444" />
            <path d="M468 955V932" stroke="#0be00b" stroke-width="3" /><path d="M468 926l-4 8h8z" fill="#0be00b" />
            <path d="M468 959H490" stroke="#f00" stroke-width="3" /><path d="M497 959l-9-4v8z" fill="#f00" />
            <circle cx="468" cy="959" r="5" fill="#1010c0" />
            <text x="465" y="926" fill="#0be00b" font-size="13">Y</text>
            <text x="499" y="965" fill="#f00" font-size="15">X</text>
          </svg>
          <div class="rtool">
            <svg class="rti" viewBox="0 0 24 24"><ellipse cx="12" cy="12" rx="10" ry="8" fill="none" stroke="#46525e" /><path d="M2 14C6 5 16 4 22 8" fill="none" stroke="#2b7de9" stroke-width="1.3" /></svg>
            <svg class="rti" viewBox="0 0 24 24"><path d="M2 7h16v15H2zM2 7l4-5h16v15l-4 5M18 7l4-5" fill="none" stroke="#46525e" /><text x="4" y="19" font-size="7" font-weight="700" fill="#2b7de9">3D</text></svg>
            <svg class="rti" viewBox="0 0 24 24"><path d="M2 7h16v15H2zM2 7l4-5h16v15l-4 5M18 7l4-5" fill="none" stroke="#46525e" /></svg>
            <i class="car"></i>
            <svg class="rti" viewBox="0 0 24 24"><path d="M2 7h16v15H2zM2 7l4-5h16v15l-4 5M18 7l4-5" fill="#cfe2fa" stroke="#2b7de9" /></svg>
            <i class="car"></i>
            <svg class="rti" viewBox="0 0 24 24"><path d="M2 8V2h6M16 2h6v6M22 16v6h-6M8 22H2v-6" fill="none" stroke="#46525e" /></svg>
            <svg class="rti" viewBox="0 0 24 24"><rect x="1.5" y="1.5" width="21" height="21" rx="2" fill="none" stroke="#46525e" stroke-dasharray="3 2" /><path d="M12 5l6 3.5v7L12 19l-6-3.5v-7zM6 8.5l6 3.5 6-3.5M12 12v7" fill="none" stroke="#2b7de9" /></svg>
            <i class="rdiv"></i>
            <svg class="rti" viewBox="0 0 24 24"><path d="M2 2h20v12M22 20v2H2V2" fill="none" stroke="#46525e" /><path d="M5 7h3M10 7h8M5 11h3M10 11h5M5 15h3M10 15h2" stroke="#46525e" /><circle cx="19" cy="19" r="3" fill="none" stroke="#2b7de9" /></svg>
          </div>
          <div class="tip">
            <span>点击图标可调节提示信息位置~</span><span class="tip2">不再提示</span>
          </div>
        </div>
        <div class="hint">
          <svg width="14" height="18" viewBox="0 0 14 18"><path d="M12 1L8 8v-4M8 8h4M2 17l4-7h-4M6 10v4" fill="none" stroke="#fff" /></svg>
          <span>按鼠标左键指定第一个角点&#xFF0C;或拾取构件图元</span>
        </div>
      </div>

      <div class="gut g-r"><i class="handle lite"></i></div>

      <!-- right panel -->
      <div class="right panel">
        <div class="stripe"><span class="xx">×</span></div>
        <div class="phead">显示设置</div>
        <div class="rtabs"><span class="rtab act">图元显示</span><span class="rtab">楼层显示</span></div>
        <div class="rt">
          <div class="rtinner">
            <div class="rtr rth"><span>图层构件</span><span>显示图元</span><span>显示名称</span></div>
            <div class="rtscroll">
              <div v-for="(r, i) in rows" :key="i" class="rtr">
                <span class="tc" :class="{ par: r.par, leaf: !r.par }">
                  <i v-if="r.par" class="minus">−</i>{{ r.t }}
                </span>
                <span class="cc"><i class="cb" :class="r.s"></i></span>
                <span class="cc"><i class="cb"></i></span>
              </div>
            </div>
          </div>
          <div class="rsb"><div class="rsbt"></div></div>
        </div>
        <div class="rfoot"><span class="restore">恢复默认设置</span></div>
      </div>
    </div>

    <!-- status -->
    <div class="status">
      <span class="st s1">层高&#xFF1A;&nbsp;3</span>
      <span class="st s2">标高&#xFF1A;&nbsp;-0.05~2.95</span>
      <span class="st s3">选中图元&#xFF1A;&nbsp;0</span>
      <span class="st s4">隐藏图元&#xFF1A;&nbsp;0</span>
      <span v-for="(b, i) in stBtns" :key="i" class="stb" :class="{ on: b.on, dis: b.dis }" :style="{ width: b.w + 'px', marginLeft: b.ml + 'px' }">
        <svg width="16" height="16" viewBox="0 0 16 16" v-html="b.i"></svg>
        <i v-if="b.c" class="car"></i>
      </span>
    </div>

    <!-- taskbar -->
    <div class="taskbar">
      <div class="start">
        <svg width="18" height="18" viewBox="0 0 18 18"><path d="M0 2.5l7.5-1v7H0zM8.5 1.4L18 0v8.5H8.5zM0 9.5h7.5v7l-7.5-1zM8.5 9.5H18V18l-9.5-1.4z" fill="#fff" /></svg>
      </div>
      <div class="tsearch">
        <svg width="18" height="18" viewBox="0 0 18 18"><circle cx="11" cy="7" r="5.5" fill="none" stroke="#222" stroke-width="1.2" /><path d="M7 11.5L2 17" stroke="#222" stroke-width="1.2" /></svg>
        <span>在此键入进行搜索</span>
        <svg class="blob" width="77" height="39" viewBox="0 0 77 39">
          <path d="M0 39C3 22 16 10 36 6c14-3 30-1 41 5v28z" fill="#d8bb90" />
          <path d="M0 39C4 22 14 14 34 13c-2 5-8 9-14 10-6 2-8 8-9 16z" fill="#1e8fd0" />
          <path d="M18 21c4-5 10-7 18-8 6 1 10-1 14-1-3 4-8 6-14 7-6 0-12 1-18 2z" fill="#34b7b6" />
          <path d="M28 6l6-5 13 2 8-1 5 5-5 6-14 1-12-3z" fill="#8b7a60" />
          <path d="M20 28v11M24 31v8M29 33v6" stroke="#e8b94a" stroke-width="1.5" />
        </svg>
      </div>
      <div class="tapps">
        <span class="tapp tv"><svg width="16" height="18" viewBox="0 0 16 18"><path d="M2 1h12M2 17h12" stroke="#fff" /><rect x="2" y="5" width="12" height="8" fill="none" stroke="#fff" /><path d="M0 5v8M16 5v8" stroke="#fff" /></svg></span>
        <span class="tapp u"><svg width="22" height="22" viewBox="0 0 22 22"><path d="M1 3h8l2 2h10v15H1z" fill="#f2c744" /><path d="M1 8h20v12H1z" fill="#fbdc6e" /><path d="M7 13h8v7H7z" fill="#2f7fd0" /><path d="M9 16h4v4H9z" fill="#fbdc6e" /></svg></span>
        <span class="tapp u"><svg width="24" height="24" viewBox="0 0 24 24"><rect x="3" y="1" width="18" height="22" rx="2" fill="#1d4f9e" stroke="#7aa" /><text x="12" y="15" text-anchor="middle" font-size="7" font-weight="700" fill="#cfe8ff">CAD</text></svg></span>
        <span class="tapp act u"><svg width="24" height="24" viewBox="0 0 24 24"><rect x="1" y="1" width="22" height="22" rx="3" fill="#e8f5fd" /><path d="M4 5h16v4h-6v11h-4V9H4z" fill="#1890f0" /></svg></span>
        <span class="tapp u"><svg width="24" height="24" viewBox="0 0 24 24"><circle cx="12" cy="12" r="11" fill="#0f6cbd" /><path d="M3 13C5 5 19 3 22 12c0 4-5 4-7 2 2 4 7 4 8 1-1 5-6 8-11 8-8-1-11-6-9-10z" fill="#39c27b" /><path d="M6 15c1-4 6-6 9-3-4 0-6 2-4 6-2 0-4-1-5-3z" fill="#0b4f9c" /></svg></span>
      </div>
      <div class="tray">
        <svg class="tr0" width="22" height="18" viewBox="0 0 22 18"><rect x="1" y="1" width="20" height="16" rx="1" fill="none" stroke="#fff" /><path d="M4 5h14M4 8h6v5H4zM12 9h6M12 12h6" fill="none" stroke="#fff" /></svg>
        <svg class="tr1" width="12" height="12" viewBox="0 0 12 12"><path d="M1 9l5-6 5 6" fill="none" stroke="#fff" /></svg>
        <svg class="tr2" width="16" height="16" viewBox="0 0 16 16"><path d="M2 15C2 8 7 3 14 2M5 15c0-5 3-8 8-9M8 15c0-3 2-5 5-5" fill="none" stroke="#cfd6dc" /></svg>
        <svg class="tr3" width="16" height="16" viewBox="0 0 16 16"><path d="M1 6h3l4-4v12l-4-4H1zM10 5c2 2 2 4 0 6M12 3c3 3 3 7 0 10" fill="none" stroke="#fff" /></svg>
        <span class="ime">英</span>
        <span class="clock"><span>9:09</span><span>2023/5/30</span></span>
        <span class="notif">
          <svg width="16" height="18" viewBox="0 0 16 18"><path d="M1 1h14v14H1z" fill="#fff" /><path d="M4 5h8M4 8h8M4 11h5" stroke="#222" /></svg>
          <b class="badge">11</b>
        </span>
      </div>
    </div>

    <!-- overlays -->
    <div class="popup">
      <span>遇到问题&#xFF0C;搜一搜</span><span class="try">立即尝试</span><i class="parrow"></i>
    </div>

    <div class="wm wm1">激活 Windows</div>
    <div class="wm wm2">转到“设置”以激活 Windows。</div>

    <div class="dialog">
      <div class="dhead">
        <span>选择参数化图形</span>
        <svg class="dmax" width="14" height="14" viewBox="0 0 14 14"><rect x="2.5" y="2.5" width="9" height="9" fill="none" stroke="#666" /></svg>
        <svg class="dx" width="14" height="14" viewBox="0 0 14 14"><path d="M2 2l10 10M12 2L2 12" stroke="#666" /></svg>
      </div>
      <div class="dbody">
        <div class="dleft">
          <div class="dsub">参数化截面类型&#xFF1A;</div>
          <div class="gridwrap">
            <div class="cells">
              <div v-for="(t, i) in thumbs" :key="i" class="cell">
                <svg class="thumb" :class="{ sel1: i === 0 }" viewBox="0 0 420 420" v-html="t"></svg>
              </div>
            </div>
            <div class="gsb"><div class="gsbt"></div></div>
          </div>
        </div>
        <div class="dright">
          <div class="dunit">
            <span>单位&#xFF1A;</span><span class="mm">mm</span>
            <i class="radio on"></i><span>角度放坡形式</span>
            <i class="radio r2"></i><span>底宽放坡形式</span>
            <span class="rebar">配筋形式</span>
          </div>
          <div class="preview">
            <svg width="464" height="462" viewBox="0 0 464 462">
              <g class="ne" transform="scale(0.4337 0.3764) translate(-21 -194)">
                <g fill="none" stroke="#fff">
                  <path d="M21 873H262V1293H21 M262 1157H330 M21 1332H262 M258 1322L266 1342" />
                  <path d="M403 879H1091 M725 879V694 M703 694H750L755 682 760 710 765 694H812 M797 694V879" />
                  <path d="M370 879H395 M370 1085H397 M378 879V958 M378 1010V1085" />
                  <path d="M403 862V912L416 912 403 925V965 M403 942H463L540 1085 M455 1085H960L1040 942H1091 M1062 902L1030 960H1090" />
                  <path d="M709 1085V1215 M781 1048V1215 M709 1048H808 M688 1216H735L740 1232 746 1204 752 1216H796" />
                  <path d="M514 892H536 M527 892V965 M514 965H536" />
                  <path d="M592 905V841H645 M810 892L826 843H895L880 892 M852 843L835 892 M875 843L858 892" />
                  <path d="M612 1042V995H652 M780 1032L808 1014H878L854 1032 M825 1014L800 1032 M850 1014L825 1032" />
                  <path d="M1010 1018L1030 980H1038 M1018 1018L1040 966H1080 M985 1018H1018" />
                  <path d="M500 1085A40 40 0 0 1 518 1046" />
                </g>
                <g fill="none" stroke="#f00000" stroke-width="2">
                  <path d="M406 892H445L523 1036H978L1057 892H1091" />
                  <path d="M968 965V892H540V965" />
                  <path d="M406 1137H445L523 1283H978L1057 1137H1091" />
                </g>
              </g>
              <g fill="#ffff40">
                <rect v-for="x in dotsTop" :key="'dt' + x" :x="px(x) - 1" :y="py(892) - 1" width="2" height="2" />
                <rect v-for="x in dotsBot" :key="'db' + x" :x="px(x) - 1" :y="py(1030) - 1" width="2" height="2" />
              </g>
              <g fill="#ff30ff">
                <rect v-for="m in dotsMag" :key="'dm' + m[0]" :x="px(m[0]) - 1" :y="py(m[1]) - 1" width="2" height="2" />
              </g>
              <g class="ptxt">
                <text :x="px(500)" :y="py(818) + 5" fill="#fff" font-size="13">横向面筋</text>
                <text :x="px(616)" :y="py(818) + 5" fill="#00ff00" font-size="11" textLength="17" lengthAdjust="spacingAndGlyphs">KMJ</text>
                <text :x="px(808)" :y="py(822) + 5" fill="#fff" font-size="13">纵向面筋</text>
                <text :x="px(926)" :y="py(822) + 5" fill="#00ff00" font-size="11" textLength="19" lengthAdjust="spacingAndGlyphs">YMJ</text>
                <text :x="px(560)" :y="py(970) + 5" fill="#fff" font-size="13">横向底筋</text>
                <text :x="px(674)" :y="py(972) + 5" fill="#00ff00" font-size="11" textLength="47" lengthAdjust="spacingAndGlyphs">C12@200</text>
                <text :x="px(742)" :y="py(990) + 5" fill="#fff" font-size="13">纵向底筋</text>
                <text :x="px(870)" :y="py(990) + 5" fill="#00ff00" font-size="11" textLength="49" lengthAdjust="spacingAndGlyphs">C12@200</text>
                <text :x="px(1040)" :y="py(988) + 5" fill="#00ff00" font-size="11" textLength="21" lengthAdjust="spacingAndGlyphs">C12</text>
                <text :transform="`translate(${px(383)} ${py(1010)}) rotate(-90)`" fill="#00ff00" font-size="12" textLength="22" lengthAdjust="spacingAndGlyphs">800</text>
                <text :transform="`translate(${px(510)} ${py(934)}) rotate(-90)`" fill="#00ff00" font-size="11">0</text>
                <text :transform="`translate(${px(492)} ${py(1080)}) rotate(-60)`" fill="#00ff00" font-size="11">90</text>
                <text :transform="`translate(${px(1012)} ${py(925)}) rotate(-62)`" fill="#fff" font-size="12">节点设置</text>
                <text :x="px(288)" :y="py(1150)" fill="#fff" font-size="27" class="ser">1</text>
                <text :x="px(610)" :y="py(1372) + 26" fill="#fff" font-size="30">全部翻起</text>
              </g>
              <rect :x="px(808)" :y="py(1047)" width="58" height="22" fill="#fff" />
              <text :x="px(818)" :y="py(1090)" fill="#111" font-size="14" class="mono">100</text>
            </svg>
          </div>
        </div>
      </div>
      <div class="dfoot">
        <span class="dbtn ok">确定</span><span class="dbtn cancel">取消</span>
      </div>
      <svg class="grip" width="8" height="8" viewBox="0 0 8 8"><path d="M6 0h2v2H6zM3 3h2v2H3zM6 3h2v2H6zM0 6h2v2H0zM3 6h2v2H3zM6 6h2v2H6z" fill="#777" /></svg>
    </div>
  </div>
</template>

<style>
html, body { margin: 0; padding: 0; background: #000; overflow: hidden; }
</style>

<style scoped>
.app {
  position: relative; width: 1920px; height: 1080px; display: flex; flex-direction: column; overflow: hidden;
  background: #f0f0f0; color: #333; font: 12px/1.2 "Noto Sans CJK SC", "Liberation Sans", sans-serif;
}
i { font-style: normal; display: inline-block; }
.car { width: 0; height: 0; border: 3px solid transparent; border-top: 4px solid #777; border-bottom: 0; margin-left: 6px; vertical-align: middle; }
.car.lite { border-top-color: #bbb; }
.car.tiny { border-width: 2px; border-top-width: 3px; border-bottom: 0; margin-left: 2px; }

.head { height: 41px; display: flex; background: #fff; }
.logo { width: 49px; flex: none; }
.head-r { flex: 1; display: flex; flex-direction: column; min-width: 0; }
.titlebar { height: 20px; display: grid; grid-template-columns: 500px 1fr 553px; align-items: center; }
.qat { display: flex; align-items: center; }
.qi { width: 16px; height: 16px; padding: 0 5px; flex: none; }
.qi1 { width: 16px; height: 16px; flex: none; }
.qc { width: 35px; display: flex; align-items: center; padding-left: 3px; box-sizing: border-box; }
.qmore { margin-left: 2px; }
.title { font-size: 12.5px; color: #333; white-space: nowrap; text-align: center; }
.winbtns { display: flex; justify-content: flex-end; gap: 23px; padding-right: 12px; }
.menurow { height: 21px; display: flex; align-items: center; }
.tabs { display: flex; align-items: center; }
.tab { padding: 0 13px; height: 19px; line-height: 19px; white-space: nowrap; color: #333; }
.tab.act { background: #1e90ff; color: #fff; border-radius: 10px; }
.tab:last-child { margin-left: 3px; }
.search { margin-left: auto; width: 319px; height: 16px; border: 1px solid #e5e5e5; box-sizing: border-box; display: flex; align-items: center; justify-content: space-between; padding: 0 5px 0 3px; color: #222; }
.avatar { margin-left: 6px; height: 16px; }
.uname { margin-left: 2px; width: 48px; white-space: nowrap; }
.hi { width: 16px; height: 16px; }
.chat { margin-left: 16px; }
.qm { margin-left: 6px; width: 18px; font-size: 14px; color: #555; }
.shirt { margin-left: 4px; }
.upb { margin-left: 7px; margin-right: 5px; }

.ribbon { height: 98px; background: #fff; border-bottom: 2px solid #dcdcdc; box-sizing: border-box; display: flex; }
.rg { flex: none; box-sizing: border-box; border-right: 1px solid #dcdcdc; margin: 2px 0 3px; display: flex; flex-direction: column; }
.rg-body { height: 68px; padding-top: 1px; display: flex; }
.rc { flex: none; display: flex; flex-direction: column; }
.ri { height: 22.8px; display: flex; align-items: center; gap: 3px; white-space: nowrap; }
.ri.dis { color: #b4b4b4; }
.ri.dis .ic { opacity: .7; }
.ic { width: 16px; height: 16px; flex: none; }
.big { width: 100%; height: 68px; display: flex; flex-direction: column; align-items: center; border-radius: 2px; position: relative; }
.big.active { width: 40px; background: #bdd7f0; }
.bigi { width: 40px; height: 38px; flex: none; }
.bigt { margin-top: 2px; white-space: nowrap; }
.bigc { margin: 5px 0 0; }
.rg-label { flex: 1; display: flex; align-items: center; justify-content: center; white-space: nowrap; margin-top: 5px; }
.car.lab { margin-left: 7px; border-width: 4px; border-top-width: 5px; border-bottom: 0; }

.selbar { height: 27px; display: flex; gap: 3px; padding: 3px 0 0 3px; box-sizing: border-box; background: #f0f0f0; }
.sel { width: 99px; height: 21px; background: #fff; border-radius: 3px; border: 1px solid #e8e8e8; box-sizing: border-box; display: flex; align-items: center; justify-content: space-between; padding: 0 5px 0 3px; }

.main { height: 843px; display: flex; }
.panel { background: #fff; border: 1px solid #cfcfcf; border-top: 0; box-sizing: border-box; display: flex; flex-direction: column; }
.stripe { height: 11px; background: #e4e4e4; border-bottom: 1px solid #d6d6d6; display: flex; justify-content: flex-end; flex: none; }
.xx { color: #999; font-size: 12px; line-height: 11px; padding-right: 2px; }
.phead { height: 22px; line-height: 22px; background: #f0f0f0; border-bottom: 1px solid #e0e0e0; padding-left: 8px; color: #8a8a8a; box-sizing: border-box; flex: none; }
.nav { width: 129px; flex: none; }
.gut { flex: none; display: flex; align-items: center; }
.g-l { width: 5px; }
.g-m { width: 4px; }
.g-r { width: 4px; }
.handle { width: 4px; height: 99px; background: #5a6470; margin-top: -72px; }
.handle.lite { background: #6f7b86; }
.navtool { height: 28px; display: flex; align-items: center; padding-left: 5px; border-bottom: 1px solid #e0e0e0; box-sizing: border-box; flex: none; }
.ntb { width: 24px; height: 22px; background: #bdd7f5; border-radius: 3px; display: flex; align-items: center; justify-content: center; margin-left: 4px; }
.ntb:nth-of-type(1) { margin-left: 9px; }
.navbody { flex: 1; display: flex; min-height: 0; overflow: hidden; }
.navlist { width: 114px; flex: none; padding-top: 5px; overflow: hidden; }
.nh { position: relative; height: 25px; line-height: 25px; margin-bottom: 3px; background: #ededed; padding: 0 0 3px 4px; box-sizing: border-box; white-space: nowrap; overflow: hidden; color: #333; display: flex; align-items: center; }
.dot { position: absolute; width: 6px; height: 6px; border-radius: 50%; background: #f00; top: 2px; }
.nh .dot { top: 3px; }
.dot.sub { top: 1px; }
.lock { margin-left: 2px; flex: none; }
.free { margin-left: 2px; flex: none; height: 19px; line-height: 19px; padding-left: 5px; width: 60px; border-radius: 10px 0 0 10px; background: linear-gradient(90deg, #f8d7a0, #eeb45f); color: #7a3f00; box-sizing: border-box; font-size: 11px; margin-top: 2px; }
.ns { position: relative; height: 25px; margin-bottom: 3px; display: flex; align-items: center; white-space: nowrap; overflow: hidden; color: #444; }
.nst { margin-top: -2px; }
.ns.on { background: #cfe5fb; }
.nsi { width: 20px; height: 20px; margin: 0 13px 0 16px; flex: none; }
.navscroll { flex: 1; position: relative; padding: 109px 0 0 3px; }
.navthumb { width: 8px; height: 632px; background: #c8c8c8; border-radius: 4px; }

.mid { width: 280px; flex: none; display: flex; flex-direction: column; gap: 4px; }
.up { height: 407px; }
.down { flex: 1; min-height: 0; }
.ptabs { height: 23px; display: flex; background: #f0f0f0; border-bottom: 1px solid #dcdcdc; box-sizing: border-box; flex: none; }
.ptab { width: 65px; text-align: center; line-height: 22px; color: #999; background: #dcdcdc; border: 1px solid #cfcfcf; border-bottom: 0; border-left: 0; box-sizing: border-box; }
.ptab.act { color: #333; font-weight: 700; background: #f0f0f0; }
.mtool { height: 27px; display: flex; align-items: center; padding-left: 4px; border-bottom: 1px solid #e5e5e5; box-sizing: border-box; flex: none; white-space: nowrap; }
.mti { width: 15px; height: 15px; flex: none; margin-right: 5px; }
.i1 { margin-left: 11px; }
.i2 { margin-left: 12px; }
.i3 { margin-left: 11px; }
.c0 { margin-left: 7px; }
.more { margin-left: 15px; width: 10px; height: 18px; border: 1px solid #eee; color: #666; font-size: 7px; line-height: 18px; text-align: center; }
.msearch { height: 19px; display: flex; align-items: center; justify-content: space-between; padding: 0 8px 0 3px; color: #b5b5b5; border-bottom: 1px solid #e5e5e5; box-sizing: border-box; flex: none; }
.tree { padding-top: 7px; }
.t1 { height: 18px; display: flex; align-items: center; padding-left: 9px; }
.t1 .car { margin-right: 3px; border-width: 3px; border-top-width: 4px; border-bottom: 0; }
.t2 { padding: 3px 0 0 40px; }
.t2in { display: inline-block; width: 70px; height: 21px; line-height: 21px; padding-left: 3px; background: #c1d8f0; border-radius: 3px; box-sizing: border-box; }
.pt { flex: 1; display: flex; flex-direction: column; min-height: 0; }
.ptr { display: grid; grid-template-columns: 22px 101px 113px 41px; height: 21px; flex: none; }
.ptr > span { border-right: 1px solid #dcdcdc; border-bottom: 1px solid #dcdcdc; box-sizing: border-box; line-height: 20px; padding-left: 3px; white-space: nowrap; overflow: hidden; display: flex; align-items: center; }
.ptr .ctr { justify-content: center; padding-left: 0; }
.c-n { background: #f0f0f0; }
.ptr .num { justify-content: center; padding-left: 0; font-size: 13px; }
.link { color: #2a55df; }
.zero { color: #9aa0a6; }
.plus { width: 11px; height: 11px; border: 1px solid #999; border-radius: 2px; font-size: 11px; line-height: 10px; text-align: center; margin: 0 6px 0 2px; color: #555; flex: none; }
.cb { width: 13px; height: 13px; border: 1px solid #8c8c8c; border-radius: 2px; box-sizing: border-box; position: relative; background: #fff; flex: none; }
.ptfill { flex: 1; width: 22px; background: #f3f3f3; }

.canvas { flex: 1; min-width: 0; display: flex; flex-direction: column; background: #000; }
.cad { flex: 1; position: relative; overflow: hidden; background: #000; }
.cadsvg { display: block; }
.cadt text { font-family: "Liberation Sans", sans-serif; font-size: 20px; }
.hint { height: 27px; flex: none; background: #2d2d2d; display: flex; align-items: center; padding-left: 480px; gap: 4px; color: #fff; font-weight: 500; }
.rtool { position: absolute; left: 1185px; top: 0; width: 33px; height: 246px; background: #fff; border-radius: 0 0 0 2px; display: flex; flex-direction: column; align-items: center; padding-top: 10px; box-sizing: border-box; gap: 0; }
.rti { width: 20px; height: 20px; margin: 3px 0 6px; flex: none; }
.rtool .car { margin: 0 0 6px; border-width: 4px; border-top-width: 4px; border-bottom: 0; }
.rdiv { width: 22px; height: 1px; background: #bbb; margin: 1px 0 2px; flex: none; }
.tip { position: absolute; left: 468px; top: 782px; width: 278px; height: 28px; background: #0a8dff; border-radius: 3px; color: #fff; display: flex; align-items: center; padding-left: 7px; box-sizing: border-box; }
.tip::after { content: ""; position: absolute; left: 14px; top: 28px; border: 5px solid transparent; border-top: 6px solid #0a8dff; border-bottom: 0; }
.tip2 { margin-left: 38px; color: #a8d4ff; }

.right { width: 280px; flex: none; border-right: 0; }
.rtabs { height: 28px; flex: none; display: flex; align-items: flex-end; padding-left: 2px; gap: 3px; border-bottom: 1px solid #d4d4d4; box-sizing: border-box; }
.rtab { width: 60px; height: 23px; line-height: 22px; text-align: center; background: #e4e4e4; border-radius: 3px 3px 0 0; color: #666; box-sizing: border-box; }
.rtab.act { width: 62px; color: #2b7de9; background: #fff; border: 1px solid #d4d4d4; border-bottom: 0; }
.rt { margin: 0 2px 0 3px; flex: none; height: 742px; border: 1px solid #d4d4d4; border-top: 0; display: flex; box-sizing: border-box; overflow: hidden; }
.rtinner { width: 257px; flex: none; display: flex; flex-direction: column; overflow: hidden; }
.rtscroll { flex: 1; overflow: hidden; }
.rtr { display: grid; grid-template-columns: 131px 63px 63px; height: 21px; }
.rtr > span { border-right: 1px solid #dcdcdc; border-bottom: 1px solid #dcdcdc; box-sizing: border-box; display: flex; align-items: center; white-space: nowrap; }
.rth { height: 23px; }
.rth > span { justify-content: center; }
.tc { position: relative; }
.tc.leaf { padding-left: 40px; background: linear-gradient(#e2e2e2, #e2e2e2) 8px 0 / 1px 100% no-repeat, linear-gradient(#e2e2e2, #e2e2e2) 18px 0 / 1px 100% no-repeat, linear-gradient(#e2e2e2, #e2e2e2) 18px 10px / 16px 1px no-repeat; }
.tc.par { padding-left: 12px; background: linear-gradient(#e2e2e2, #e2e2e2) 8px 0 / 1px 100% no-repeat; }
.minus { width: 12px; height: 12px; border: 1px solid #888; border-radius: 2px; box-sizing: border-box; text-align: center; line-height: 10px; font-size: 11px; color: #444; margin-right: 7px; background: #fff; flex: none; }
.cc { justify-content: center; }
.cb.on { background: #2f80e8; border-color: #2f80e8; }
.cb.on::after { content: ""; position: absolute; left: 3px; top: 1px; width: 5px; height: 7px; border: solid #fff; border-width: 0 2px 2px 0; box-sizing: border-box; transform: rotate(40deg); }
.cb.mix { border-color: #777; box-shadow: inset 0 0 0 1px #fff, inset 0 0 0 2px #3a87e8; background: #90c4ff; }
.rsb { flex: 1; padding: 497px 0 0 4px; box-sizing: border-box; }
.rsbt { width: 8px; height: 183px; background: #c8c8c8; border-radius: 4px; }
.rfoot { flex: 1; display: flex; justify-content: flex-end; align-items: center; padding-right: 9px; }
.restore { width: 90px; height: 26px; line-height: 24px; text-align: center; border: 1px solid #d0d0d0; border-radius: 4px; background: #fff; box-sizing: border-box; margin-top: 4px; }

.status { height: 31px; flex: none; background: #fbfbfb; display: flex; align-items: center; }
.st { white-space: nowrap; flex: none; }
.s1 { width: 90px; padding-left: 2px; box-sizing: border-box; }
.s2 { width: 140px; }
.s3 { width: 110px; }
.s4 { width: 111px; }
.stb { height: 25px; border: 1px solid #a8a8a8; border-radius: 4px; box-sizing: border-box; display: flex; align-items: center; justify-content: center; flex: none; }
.stb .car { margin-left: 3px; border-top-color: #555; }
.stb.on { background: #d8e9fa; border-color: #4a90e2; }
.stb.dis { border-color: #d0d0d0; }

.taskbar { height: 40px; flex: none; display: flex; background: linear-gradient(90deg, #203b48, #1f3a4a 50%, #1b2c48); color: #fff; }
.start { width: 48px; display: flex; align-items: center; justify-content: center; flex: none; }
.tsearch { width: 344px; flex: none; background: #f2f2f2; border-top: 2px solid #bfbfbf; box-sizing: border-box; display: flex; align-items: center; color: #222; font-size: 14px; padding-left: 11px; gap: 9px; position: relative; overflow: hidden; }
.blob { position: absolute; right: 0; bottom: 0; }
.tapps { display: flex; flex: none; }
.tapp { width: 49.5px; height: 40px; display: flex; align-items: center; justify-content: center; position: relative; box-sizing: border-box; }
.tapp.act { background: #47606d; }
.tapp.u::after { content: ""; position: absolute; left: 5px; right: 5px; bottom: 0; height: 2px; background: #76b9ed; }
.tapp.tv { width: 48px; }
.tray { margin-left: auto; display: flex; align-items: center; flex: none; }
.tr1 { margin-left: 24px; }
.tr2 { margin-left: 12px; }
.tr3 { margin-left: 6px; }
.ime { margin-left: 10px; font-size: 15px; width: 18px; }
.clock { display: flex; flex-direction: column; align-items: center; gap: 5px; margin-left: 2px; width: 70px; font-size: 12px; line-height: 14px; color: #e6e6e6; }
.notif { position: relative; width: 48px; margin-left: 6px; display: flex; justify-content: center; }
.badge { position: absolute; left: 24px; top: 7px; width: 18px; height: 18px; line-height: 18px; text-align: center; background: #555; border-radius: 50%; font-weight: 400; font-size: 12px; }

.popup { position: absolute; left: 1217px; top: 13px; width: 196px; height: 34px; background: #0a8dff; border-radius: 3px; color: #fff; display: flex; align-items: center; padding-left: 7px; box-sizing: border-box; }
.try { margin-left: 19px; width: 60px; height: 17px; line-height: 17px; text-align: center; background: rgba(255, 255, 255, .18); border-radius: 2px; }
.parrow { position: absolute; right: -5px; top: 12px; border: 5px solid transparent; border-left: 5px solid #0a8dff; border-right: 0; }

.wm { position: absolute; left: 1631px; color: rgba(165, 165, 165, .72); white-space: nowrap; font-family: "Noto Sans CJK SC", sans-serif; }
.wm1 { top: 944px; font-size: 20px; }
.wm2 { top: 972px; font-size: 14px; }

.dialog { position: absolute; left: 475px; top: 231px; width: 970px; height: 577px; background: #fff; border: 1px solid #a0a0a0; box-sizing: border-box; display: flex; flex-direction: column; padding: 0 11px; }
.dhead { height: 39px; padding-bottom: 3px; box-sizing: border-box; display: flex; align-items: center; font-size: 13px; color: #333; flex: none; }
.dmax { margin-left: auto; margin-right: 14px; }
.dx { margin-right: -1px; }
.dbody { display: flex; gap: 6px; flex: none; }
.dleft { width: 476px; flex: none; }
.dsub { height: 33px; line-height: 28px; }
.gridwrap { height: 462px; border: 1px solid #cccccc; box-sizing: border-box; display: flex; }
.cells { width: 459px; flex: none; display: grid; grid-template-columns: repeat(3, 153px); grid-auto-rows: 153px; padding-top: 0; align-content: start; }
.cell { box-sizing: border-box; border-right: 1px solid #d8d8d8; border-bottom: 1px solid #d8d8d8; padding: 6px 0 0 6px; }
.thumb { display: block; width: 140px; height: 140px; background: #6e93aa; }
.thumb.sel1 { box-shadow: 0 0 0 3px #85bfff, 0 0 0 5px #1890ff; }
.gsb { flex: 1; padding: 14px 0 0 4px; border-left: 0; }
.gsbt { width: 8px; height: 216px; background: #c8c8c8; border-radius: 4px; }
.dright { width: 464px; flex: none; }
.dunit { height: 33px; display: flex; align-items: center; white-space: nowrap; padding-bottom: 7px; box-sizing: border-box; color: #333; }
.mm { margin-left: 6px; width: 24px; margin-right: 7px; }
.radio { width: 11px; height: 11px; border: 1px solid #999; border-radius: 50%; margin-right: 4px; margin-left: 0; box-sizing: border-box; position: relative; flex: none; }
.radio.on { border-color: #2b7de9; }
.radio.on::after { content: ""; position: absolute; inset: 2px; background: #2b7de9; border-radius: 50%; }
.radio.r2 { margin-left: 10px; }
.rebar { margin-left: auto; width: 80px; height: 26px; line-height: 26px; text-align: center; background: #2f86e4; color: #fff; border-radius: 3px; }
.preview { height: 462px; background: #000; overflow: hidden; }
.preview svg { display: block; }
.ne path { vector-effect: non-scaling-stroke; }
.ser { font-family: "Liberation Serif", serif; }
.mono { font-family: "Liberation Sans", sans-serif; }
.dfoot { display: flex; justify-content: flex-end; gap: 6px; margin-top: 6px; padding-right: 1px; }
.dbtn { width: 80px; height: 26px; line-height: 25px; text-align: center; border-radius: 3px; box-sizing: border-box; }
.dbtn.ok { background: #2f86e4; color: #fff; }
.dbtn.cancel { border: 1px solid #ccc; color: #333; }
.grip { position: absolute; right: 2px; bottom: 2px; }
</style>
